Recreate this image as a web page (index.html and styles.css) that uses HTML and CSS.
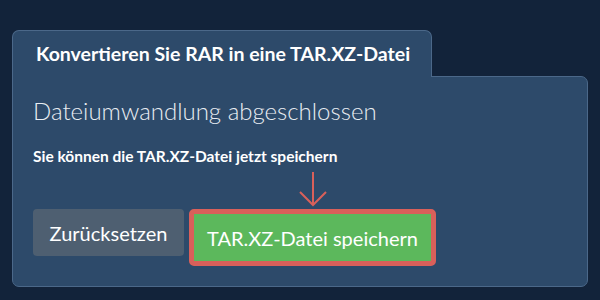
FILE: index.html
```html
<!DOCTYPE html>
<html>
<head>
    <meta charset="UTF-8">
    <title>RAR in TAR.XZ</title>
    <link rel="stylesheet" href="styles.css">
</head>
<body>
    <div class="konverter">
        <div class="reiter">Konvertieren Sie RAR in eine TAR.XZ-Datei</div>
        <div class="inhalt">
            <h2>Dateiumwandlung abgeschlossen</h2>
            <p class="hinweis">Sie können die TAR.XZ-Datei jetzt speichern</p>
            <div class="aktionen">
                <button class="knopf zuruecksetzen">Zurücksetzen</button>
                <div class="markiert">
                    <svg class="pfeil" width="30" height="36" viewBox="0 0 30 36">
                        <path d="M15 1 V34 M2 21 L15 34 L28 21" fill="none" stroke="#d9605a" stroke-width="2"/>
                    </svg>
                    <button class="knopf speichern">TAR.XZ-Datei speichern</button>
                </div>
            </div>
        </div>
    </div>
</body>
</html>
```

FILE: styles.css
```css
body {
    margin: 0;
    background-color: #12233a;
    font-family: Lato, "Open Sans", sans-serif;
    color: #fff;
}

.konverter {
    padding: 30px 12px 0 12px;
}

.reiter {
    display: inline-block;
    position: relative;
    margin-bottom: -1px;
    padding: 11px 21px 12px 23px;
    background-color: #2d4a6a;
    border: 1px solid #4b6889;
    border-bottom: none;
    border-radius: 7px 7px 0 0;
    font-size: 19.5px;
    line-height: 23px;
    font-weight: bold;
    z-index: 1;
}

.inhalt {
    box-sizing: border-box;
    height: 211px;
    background-color: #2d4a6a;
    border: 1px solid #4b6889;
    border-radius: 0 7px 7px 7px;
    padding: 19px 20px 0 20px;
}

h2 {
    margin: 0;
    font-size: 24px;
    font-weight: 300;
    color: #e9edf2;
}

.hinweis {
    margin: 22px 0 0 0;
    font-size: 15.5px;
    font-weight: bold;
}

.aktionen {
    display: flex;
    align-items: flex-start;
    gap: 5px;
    margin-top: 6px;
}

.knopf {
    font-family: Lato, "Open Sans", sans-serif;
    font-size: 20px;
    color: #fff;
    border: none;
    border-radius: 4px;
}

.zuruecksetzen {
    margin-top: 38px;
    width: 151px;
    height: 47px;
    background-color: #4e5f71;
}

.markiert {
    display: flex;
    flex-direction: column;
    align-items: center;
}

.pfeil {
    display: block;
    margin-bottom: 2px;
}

.speichern {
    width: 247px;
    height: 57px;
    background-color: #5cb85c;
    border: 5px solid #d9605a;
    border-radius: 5px;
}
```
